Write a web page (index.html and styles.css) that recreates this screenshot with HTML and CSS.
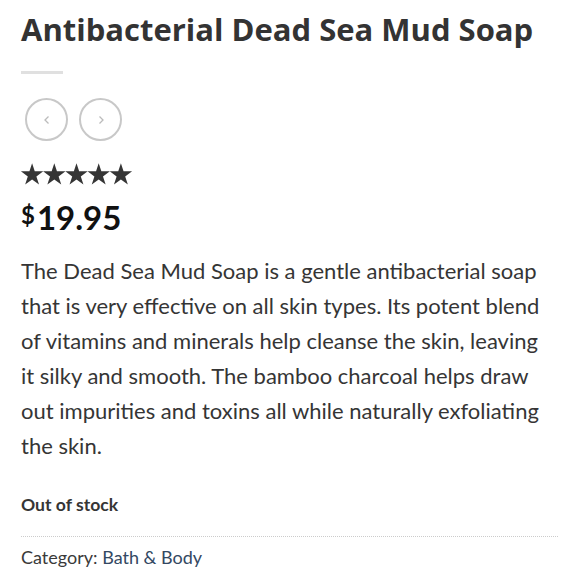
FILE: index.html
```html
<!DOCTYPE html>
<html>
<head>
<meta charset="utf-8">
<link rel="stylesheet" href="styles.css">
</head>
<body>
<div class="product">
  <h1 class="title">Antibacterial Dead Sea Mud Soap</h1>
  <div class="divider"></div>
  <div class="nav">
    <span class="nav-btn"><svg width="12" height="12" viewBox="0 0 12 12"><path d="M7.5 2.5 L4 6 L7.5 9.5" fill="none" stroke="#bbb" stroke-width="1.3"/></svg></span>
    <span class="nav-btn"><svg width="12" height="12" viewBox="0 0 12 12"><path d="M4.5 2.5 L8 6 L4.5 9.5" fill="none" stroke="#bbb" stroke-width="1.3"/></svg></span>
  </div>
  <div class="stars">
    <svg viewBox="0 0 112 22" width="112" height="22">
      <defs><path id="s" d="M11.1 0.2 L13.75 8.35 L22.3 8.35 L15.39 13.39 L18.04 21.55 L11.1 16.51 L4.16 21.55 L6.81 13.39 L-0.1 8.35 L8.45 8.35 Z" fill="#353535"/></defs>
      <use href="#s" x="0"/><use href="#s" x="22.2"/><use href="#s" x="44.4"/><use href="#s" x="66.6"/><use href="#s" x="88.8"/>
    </svg>
  </div>
  <div class="price"><span class="cur">$</span>19.95</div>
  <p class="desc">The Dead Sea Mud Soap is a gentle antibacterial soap that is very effective on all skin types. Its potent blend of vitamins and minerals help cleanse the skin, leaving it silky and smooth. The bamboo charcoal helps draw out impurities and toxins all while naturally exfoliating the skin.</p>
  <p class="stock">Out of stock</p>
  <div class="meta">Category: <a href="#">Bath &amp; Body</a></div>
</div>
</body>
</html>
```
FILE: styles.css
```css
html, body { margin: 0; padding: 0; background: #fff; }
body { font-family: Lato, sans-serif; color: #353535; }
.product { padding: 0 22px 0 21px; }
.title {
  font-family: "Open Sans", sans-serif;
  font-weight: 700;
  font-size: 31px;
  line-height: 40px;
  color: #333;
  margin: 9px 0 0;
}
.divider { width: 42px; height: 3px; background: #e0e0e0; margin: 22px 0 0; }
.nav { display: flex; gap: 11px; margin: 24px 0 0 4px; }
.nav-btn {
  width: 39px; height: 39px; border: 2px solid #c8c8c8; border-radius: 50%;
  display: flex; align-items: center; justify-content: center;
}
.stars { margin-top: 22px; height: 22px; }
.stars svg { display: block; overflow: visible; }
.price { font-size: 33px; font-weight: 700; line-height: 38px; margin-top: 11px; color: #111; }
.price .cur { font-size: 24px; vertical-align: 6px; margin-right: 2px; }
.desc { font-size: 22px; line-height: 35px; margin: 17px 0 0; padding-right: 5px; color: #353535; }
.stock { font-size: 17.6px; font-weight: 700; margin: 30px 0 0; line-height: 24px; color: #353535; }
.meta { border-top: 1px dotted #ccc; margin-top: 19px; padding-top: 8px; font-size: 18px; line-height: 24px; color: #3a3a3a; }
.meta a { color: #334862; text-decoration: none; }
```
